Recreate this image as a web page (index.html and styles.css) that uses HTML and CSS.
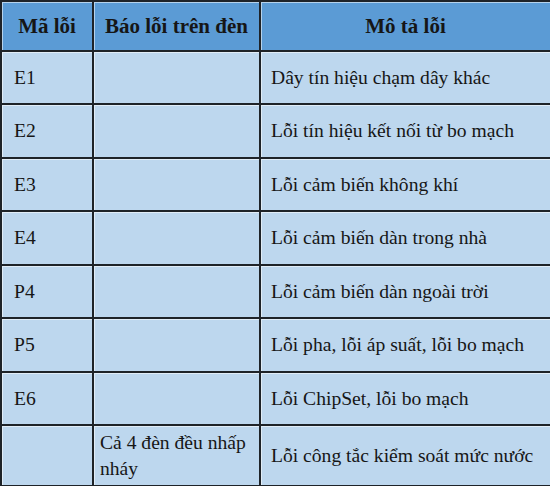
FILE: index.html
```html
<!DOCTYPE html>
<html lang="vi">
<head>
<meta charset="utf-8">
<title>Mã lỗi</title>
<link rel="stylesheet" href="styles.css">
</head>
<body>
<table class="err-table">
  <colgroup>
    <col class="c1"><col class="c2"><col class="c3">
  </colgroup>
  <thead>
    <tr class="head-row">
      <th>Mã lỗi</th>
      <th>Báo lỗi trên đèn</th>
      <th>Mô tả lỗi</th>
    </tr>
  </thead>
  <tbody>
    <tr class="r-a"><td class="code">E1</td><td class="lamp"></td><td class="desc">Dây tín hiệu chạm dây khác</td></tr>
    <tr class="r-b"><td class="code">E2</td><td class="lamp"></td><td class="desc">Lỗi tín hiệu kết nối từ bo mạch</td></tr>
    <tr class="r-a"><td class="code">E3</td><td class="lamp"></td><td class="desc">Lỗi cảm biến không khí</td></tr>
    <tr class="r-b"><td class="code">E4</td><td class="lamp"></td><td class="desc">Lỗi cảm biến dàn trong nhà</td></tr>
    <tr class="r-a"><td class="code">P4</td><td class="lamp"></td><td class="desc">Lỗi cảm biến dàn ngoài trời</td></tr>
    <tr class="r-b"><td class="code">P5</td><td class="lamp"></td><td class="desc">Lỗi pha, lỗi áp suất, lỗi bo mạch</td></tr>
    <tr class="r-a"><td class="code">E6</td><td class="lamp"></td><td class="desc">Lỗi ChipSet, lỗi bo mạch</td></tr>
    <tr class="r-last"><td class="code"></td><td class="lamp">Cả 4 đèn đều nhấp nháy</td><td class="desc">Lỗi công tắc kiểm soát mức nước</td></tr>
  </tbody>
</table>
</body>
</html>
```
FILE: styles.css
```css
html, body {
  margin: 0;
  padding: 0;
  background: #ffffff;
}

.err-table {
  border-collapse: collapse;
  table-layout: fixed;
  width: 550px;
  font-family: "Liberation Serif", "Times New Roman", serif;
  color: #161616;
}

.c1 { width: 92px; }
.c2 { width: 167px; }
.c3 { width: 291px; }

.err-table th,
.err-table td {
  border: 2px solid #1e2328;
  box-shadow: inset 1px 1px 0 rgba(255, 255, 255, 0.55);
  vertical-align: middle;
  padding: 0;
}

.err-table th {
  background: #5b9bd5;
  font-weight: bold;
  font-size: 21px;
  text-align: center;
  height: 48px;
}

.err-table td {
  background: #bdd7ee;
  font-size: 19.6px;
  line-height: 1.3;
}

.err-table .r-a td { height: 51px; }
.err-table .r-b td { height: 52px; }
.err-table .r-last td { height: 59px; }

.err-table .code { padding-left: 12px; }
.err-table .lamp { padding-left: 6px; padding-right: 2px; }
.err-table .desc { padding-left: 10px; }
```
